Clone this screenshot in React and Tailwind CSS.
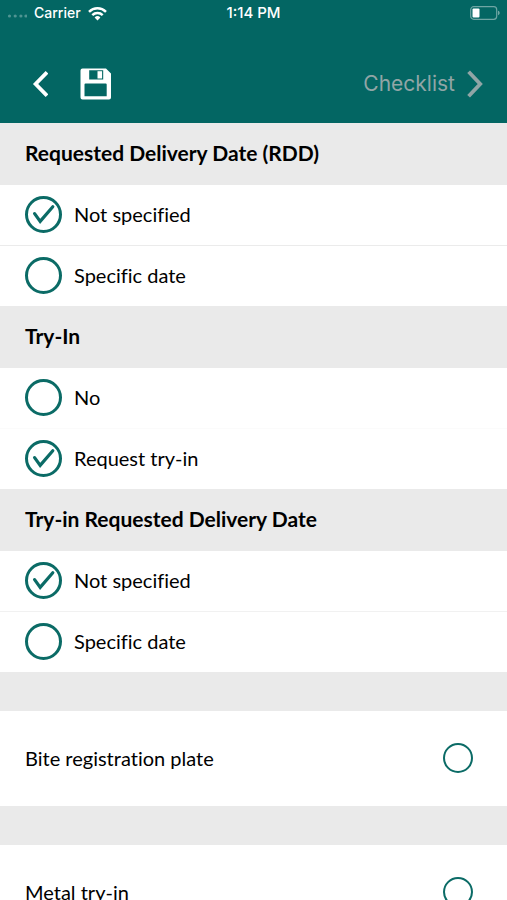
import React, { useState } from 'react';

const sections = [
    {
        id: 'rdd',
        title: 'Requested Delivery Date (RDD)',
        options: ['Not specified', 'Specific date'],
        selected: 'Not specified',
        divider: 'border-[#ebebeb]'
    },
    {
        id: 'try-in',
        title: 'Try-In',
        options: ['No', 'Request try-in'],
        selected: 'Request try-in',
        divider: 'border-[#fbfbfb]'
    },
    {
        id: 'try-in-rdd',
        title: 'Try-in Requested Delivery Date',
        options: ['Not specified', 'Specific date'],
        selected: 'Not specified',
        divider: 'border-[#f1f1f1]'
    }
];

const extras = ['Bite registration plate', 'Metal try-in'];

const StatusBar = () => (
    <div className="grid grid-cols-3 items-center h-[26px] px-[7px] text-sm font-medium">
        <div className="flex items-center">
            <svg className="w-5 h-3 mr-[7px] shrink-0" viewBox="0 0 20 12" fill="#4f9492">
                <circle cx="2.5" cy="9" r="1.6" />
                <circle cx="8.2" cy="9" r="1.6" />
                <circle cx="13.9" cy="9" r="1.6" />
                <circle cx="18.9" cy="9" r="1.6" />
            </svg>
            Carrier
            <svg className="w-[19px] h-[15px] ml-[7px] shrink-0" viewBox="0 0 19 15" fill="none" stroke="currentColor" strokeWidth="2.5">
                <path d="M1 5.8a12.2 12.2 0 0 1 17 0" />
                <path d="M4.3 9.2a7.5 7.5 0 0 1 10.4 0" />
                <path d="M9.5 14.4 6.6 11.4a4.2 4.2 0 0 1 5.8 0z" fill="currentColor" stroke="none" />
            </svg>
        </div>
        <div className="text-center text-[15px]">1:14 PM</div>
        <svg className="w-[30px] h-[14px] justify-self-end" viewBox="0 0 30 14" fill="none">
            <rect x="0.7" y="0.7" width="26" height="12.6" rx="3" stroke="#6fa6a4" strokeWidth="1.2" />
            <rect x="2.5" y="2.5" width="7" height="9" rx="1" fill="#fff" />
            <path d="M28.2 4.8c1.8.6 1.8 3.8 0 4.4z" fill="#8db8b6" />
        </svg>
    </div>
);

const Header = () => (
    <header className="shrink-0 bg-[#036663] text-white font-['Inter',sans-serif]">
        <StatusBar />
        <div className="flex items-center h-[97px] pl-8 pr-6 pt-[18px]">
            <div className="flex items-center flex-1">
                <button type="button" aria-label="Back" className="mr-8">
                    <svg className="w-4 h-7" viewBox="0 0 16 28" fill="none" stroke="currentColor" strokeWidth="3.8">
                        <path d="M15 2.2 3.6 14 15 25.8" />
                    </svg>
                </button>
                <button type="button" aria-label="Save">
                    <svg className="w-8 h-8" viewBox="0 0 32 32">
                        <path
                            fillRule="evenodd"
                            fill="currentColor"
                            d="M2.5 .5H26l5 5v24a2 2 0 0 1-2 2H2.5a2 2 0 0 1-2-2V2.500a2 2 0 0 1 2-2zM9.200 2.200v9.300h14V2.200zM5.500 15.500a1 1 0 0 0-1 1V28.200h22.200V16.500a1 1 0 0 0-1-1z"
                        />
                        <rect x="17.5" y="3.2" width="4.600" height="7.300" fill="currentColor" />
                    </svg>
                </button>
            </div>
            <button type="button" className="flex items-center gap-3 text-[21px] leading-7 text-[#91a5a6]">
                Checklist
                <svg className="w-4 h-7" viewBox="0 0 16 28" fill="none" stroke="currentColor" strokeWidth="3.8">
                    <path d="M1.6 1.8 13.2 14 1.6 26.2" />
                </svg>
            </button>
        </div>
    </header>
);

const Option = ({ name, label, checked, onChange, divider }) => (
    <label className={`flex items-center gap-3 h-[61px] px-[25px] pb-[2px] border-t ${divider}`}>
        <span className="grid shrink-0">
            <input
                type="radio"
                name={name}
                checked={checked}
                onChange={onChange}
                className="col-start-1 row-start-1 appearance-none size-[37px] rounded-full border-3 border-[#0b6b66]"
            />
            {checked && (
                <svg
                    className="col-start-1 row-start-1 size-[37px] pointer-events-none"
                    viewBox="0 0 37 37"
                    fill="none"
                    stroke="#0b6b66"
                    strokeWidth="3.2"
                >
                    <path d="M9.6 17.6 15.2 25.4 27.8 10.8" strokeLinecap="round" />
                </svg>
            )}
        </span>
        {label}
    </label>
);

const Section = ({ section }) => {
    const [selected, setSelected] = useState(section.selected);

    return (
        <fieldset>
            <legend className="flex items-center w-full h-[61px] px-[25px] pb-[2px] bg-[#eaeaea] text-[21px] font-bold">
                {section.title}
            </legend>
            {section.options.map((option, index) => (
                <Option
                    key={option}
                    name={section.id}
                    label={option}
                    checked={selected === option}
                    onChange={() => setSelected(option)}
                    divider={index === 0 ? 'border-[#eaeaea]' : section.divider}
                />
            ))}
        </fieldset>
    );
};

const App = () => {
    return (
        <div className="flex flex-col h-screen bg-white text-black">
            <Header />
            <main className="flex-1 min-h-0 overflow-y-auto [scrollbar-width:none] font-['Lato',sans-serif] text-xl [font-variant-ligatures:none]">
                {sections.map((section) => (
                    <Section key={section.id} section={section} />
                ))}
                {extras.map((extra) => (
                    <label
                        key={extra}
                        className="flex items-center justify-between h-[134px] pl-[25px] pr-[34px] pb-[2px] border-t-[39px] border-[#eaeaea]"
                    >
                        {extra}
                        <input
                            type="checkbox"
                            className="appearance-none size-[30px] rounded-full border-2 border-[#0b6b66] checked:bg-[#0b6b66]"
                        />
                    </label>
                ))}
            </main>
        </div>
    );
};

export default App;
